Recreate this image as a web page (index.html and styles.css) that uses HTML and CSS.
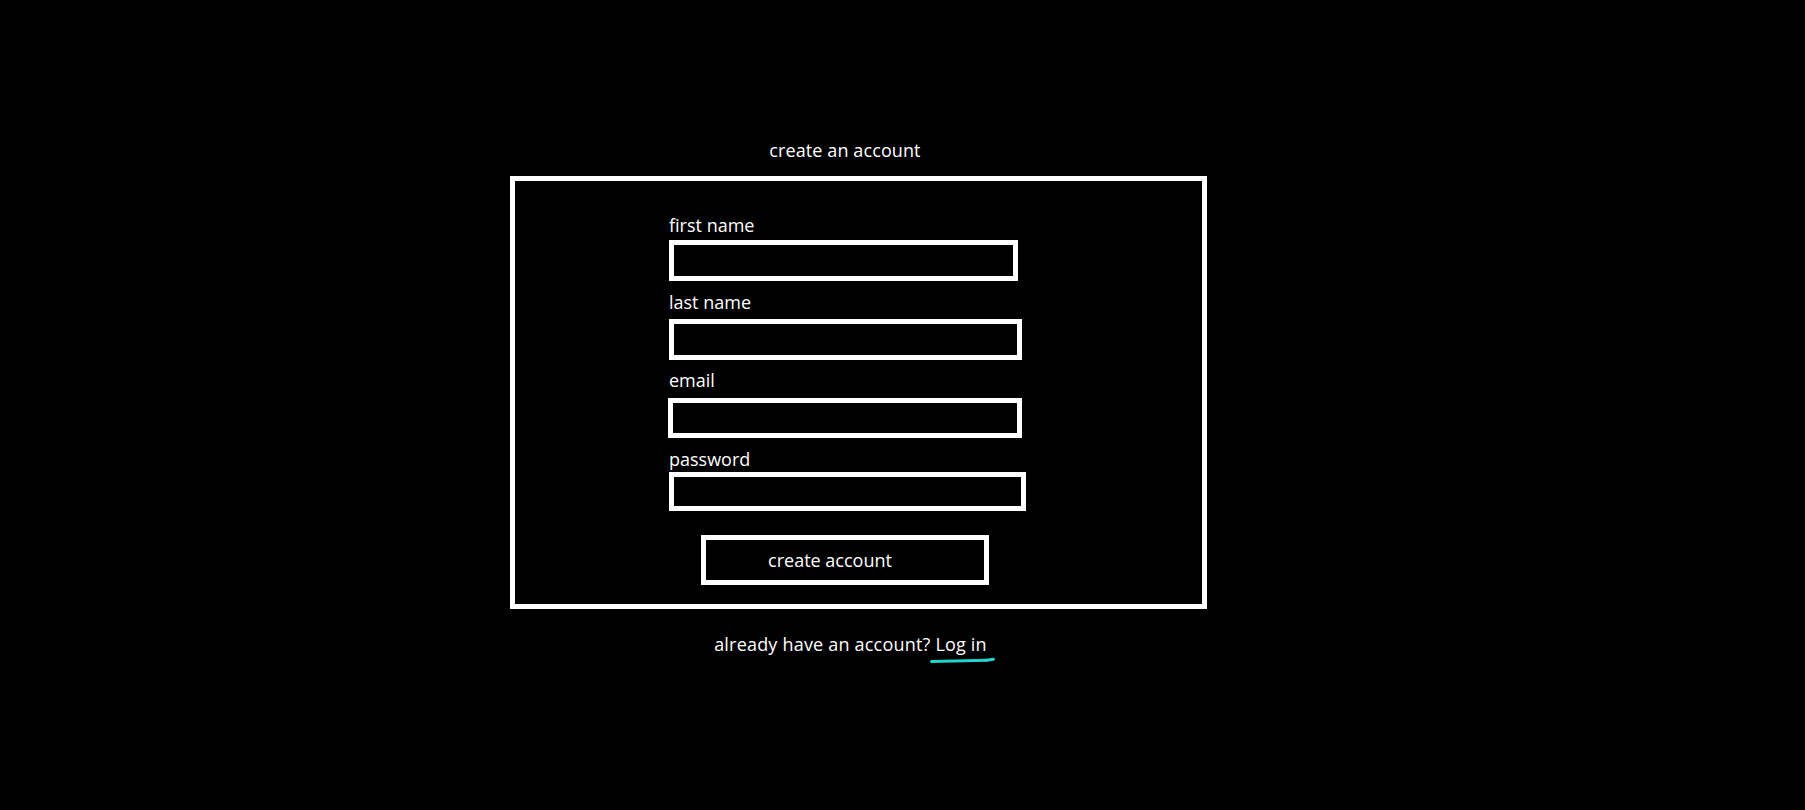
FILE: index.html
```html
<!DOCTYPE html>
<html lang="en">
<head>
<meta charset="utf-8">
<title>create an account</title>
<link rel="stylesheet" href="styles.css">
</head>
<body>
<main class="page">
  <div class="wrap">
    <h1 class="title">create an account</h1>
    <form class="card">
      <div class="field field--first">
        <label class="label" for="fn">first name</label>
        <input class="input input--first" id="fn" type="text">
      </div>
      <div class="field field--last">
        <label class="label" for="ln">last name</label>
        <input class="input input--last" id="ln" type="text">
      </div>
      <div class="field field--email">
        <label class="label" for="em">email</label>
        <input class="input input--email" id="em" type="email">
      </div>
      <div class="field field--password">
        <label class="label" for="pw">password</label>
        <input class="input input--password" id="pw" type="password">
      </div>
      <button class="submit" type="button">create account</button>
    </form>
    <p class="login">already have an account? <a class="login-link" href="#">Log in</a></p>
  </div>
</main>
</body>
</html>
```

FILE: styles.css
```css
* {
  box-sizing: border-box;
}

html,
body {
  margin: 0;
  padding: 0;
  background: #000;
}

body {
  color: #fff;
  font-family: "Open Sans", "Noto Sans", "DejaVu Sans", sans-serif;
  font-size: 18px;
  line-height: 24px;
}

.page {
  padding-top: 138px;
}

.wrap {
  margin-left: 510px;
  width: 697px;
  display: flex;
  flex-direction: column;
}

.title {
  margin: 0;
  font-size: 18px;
  font-weight: 400;
  line-height: 24px;
  text-align: center;
  padding-right: 27px;
  letter-spacing: 0.1px;
}

.card {
  margin: 14px 0 0;
  border: 5px solid #fff;
  height: 433px;
  padding: 32px 0 0 154px;
  display: flex;
  flex-direction: column;
  align-items: flex-start;
}

.field {
  display: flex;
  flex-direction: column;
  align-items: flex-start;
}

.label {
  display: block;
  height: 24px;
  line-height: 24px;
}

.input {
  display: block;
  margin: 0;
  padding: 0 8px;
  background: #000;
  color: #fff;
  border: 5px solid #fff;
  border-radius: 0;
  outline: none;
  font: inherit;
}

.field--first .label { margin-bottom: 3px; }
.input--first { width: 349px; height: 41px; }

.field--last { margin-top: 9px; }
.field--last .label { margin-bottom: 5px; }
.input--last { width: 353px; height: 41px; }

.field--email { margin-top: 8px; }
.field--email .label { margin-bottom: 6px; }
.input--email { width: 354px; height: 40px; margin-left: -1px; }

.field--password { margin-top: 9px; }
.field--password .label { margin-bottom: 1px; }
.input--password { width: 357px; height: 39px; }

.submit {
  margin: 24px 0 0 32px;
  width: 288px;
  height: 50px;
  border: 5px solid #fff;
  border-radius: 0;
  background: #000;
  color: #fff;
  font: inherit;
  line-height: 24px;
  padding: 0 30px 0 0;
  display: flex;
  align-items: center;
  justify-content: center;
  cursor: pointer;
}

.login {
  margin: 23px 0 0;
  padding: 0 16px 12px 0;
  text-align: center;
  line-height: 24px;
  letter-spacing: 0.2px;
}

.login-link {
  position: relative;
  display: inline-block;
  color: #fff;
  text-decoration: none;
}

.login-link::before {
  content: "";
  position: absolute;
  left: -5px;
  top: 28px;
  width: 58px;
  height: 3px;
  background: #1ed6cf;
  border-radius: 2px;
  transform: rotate(-1.3deg);
  transform-origin: left center;
}

.login-link::after {
  content: "";
  position: absolute;
  left: 50px;
  top: 26.5px;
  width: 10px;
  height: 3px;
  background: #1ed6cf;
  border-radius: 2px;
  transform: rotate(-9deg);
  transform-origin: left center;
}
```
